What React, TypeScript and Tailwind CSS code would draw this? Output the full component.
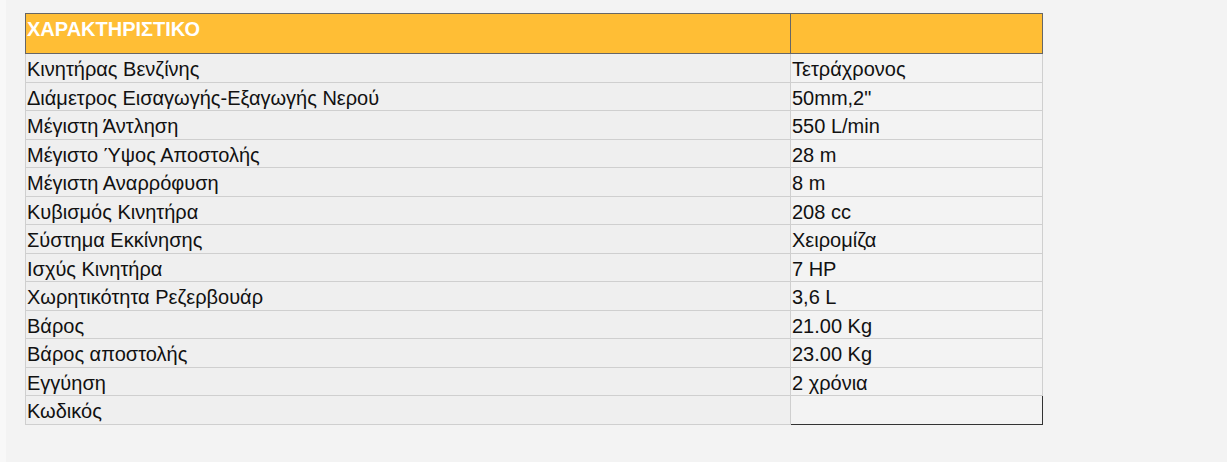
const rows: [string, string][] = [
  ['Κινητήρας Βενζίνης', 'Τετράχρονος'],
  ['Διάμετρος Εισαγωγής-Εξαγωγής Νερού', '50mm,2"'],
  ['Μέγιστη Άντληση', '550 L/min'],
  ['Μέγιστο Ύψος Αποστολής', '28 m'],
  ['Μέγιστη Αναρρόφυση', '8 m'],
  ['Κυβισμός Κινητήρα', '208 cc'],
  ['Σύστημα Εκκίνησης', 'Χειρομίζα'],
  ['Ισχύς Κινητήρα', '7 HP'],
  ['Χωρητικότητα Ρεζερβουάρ', '3,6 L'],
  ['Βάρος', '21.00 Kg'],
  ['Βάρος αποστολής', '23.00 Kg'],
  ['Εγγύηση', '2 χρόνια'],
  ['Κωδικός', ''],
]

// πίνακας χαρακτηριστικών
function SpecTable() {
  return (
    <div className="w-[1018px] text-[20px] leading-[22px] text-[#111]">
      <div className="flex h-[41px] border border-[#666] bg-[#ffbe35] font-bold text-white">
        <div className="w-[765px] border-r border-[#666] px-[1px] pt-[4px]">ΧΑΡΑΚΤΗΡΙΣΤΙΚΟ</div>
        <div className="flex-1" />
      </div>
      {rows.map(([label, value], i) => {
        const last = i === rows.length - 1
        return (
          <div key={label} className="flex h-[28.54px]">
            <div className="w-[766px] border-x border-b border-[#cfcfcf] bg-[#efefef] px-[1px] pt-[4px]">
              {label}
            </div>
            <div
              className={
                last
                  ? 'flex-1 border-r border-b border-[#333] bg-[#f3f3f3] px-[1px] pt-[4px]'
                  : 'flex-1 border-r border-b border-[#cfcfcf] bg-[#f3f3f3] px-[1px] pt-[4px]'
              }
            >
              {value}
            </div>
          </div>
        )
      })}
    </div>
  )
}

export default function App() {
  return (
    <div className="flex h-[462px] w-[1227px] bg-[#f8f8f8] font-['Liberation_Sans',Arial,sans-serif]">
      <div className="w-[6px]" />
      <div className="flex-1 bg-[#f3f3f3] pl-[19px] pt-[13px]">
        <SpecTable />
      </div>
    </div>
  )
}
